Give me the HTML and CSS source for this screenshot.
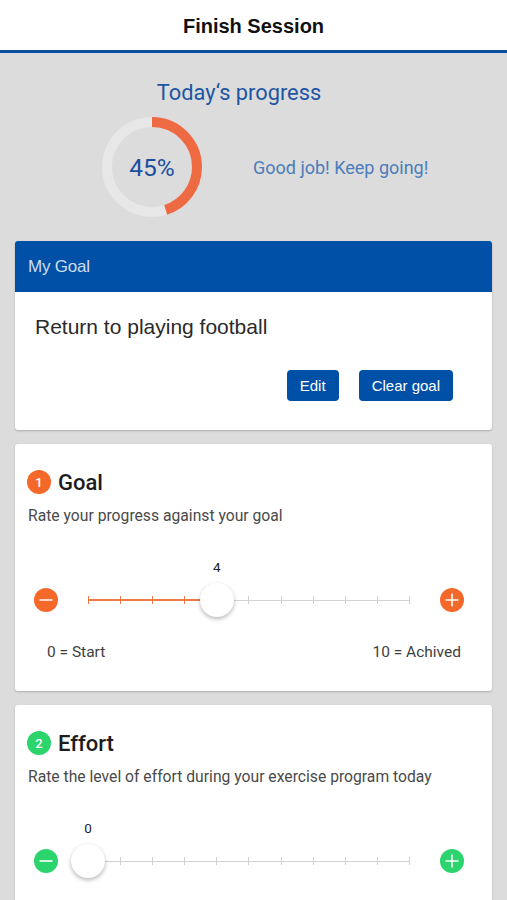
FILE: index.html
```html
<!DOCTYPE html>
<html>
<head>
<meta charset="utf-8">
<link rel="stylesheet" href="styles.css">
</head>
<body>
<header class="topbar"><h1 class="title">Finish Session</h1></header>

<section class="progress">
  <h2 class="progress-title">Today‘s progress</h2>
  <div class="progress-row">
    <div class="ring">
      <svg width="100" height="100" viewBox="0 0 100 100">
        <circle cx="50" cy="50" r="45" fill="none" stroke="#e7e7e7" stroke-width="10"/>
        <circle cx="50" cy="50" r="45" fill="none" stroke="#ee6a43" stroke-width="10" stroke-dasharray="127.2 400" transform="rotate(-90 50 50)"/>
      </svg>
      <span class="ring-label">45%</span>
    </div>
    <p class="cheer">Good job! Keep going!</p>
  </div>
</section>

<main class="cards">
  <div class="card goal-card">
    <div class="goal-head">My Goal</div>
    <div class="goal-body">
      <p class="goal-text">Return to playing football</p>
      <div class="goal-actions">
        <button class="btn">Edit</button>
        <button class="btn">Clear goal</button>
      </div>
    </div>
  </div>

  <div class="card rate-card orange">
    <div class="rate-head"><span class="badge">1</span><span class="rate-title">Goal</span></div>
    <p class="rate-desc">Rate your progress against your goal</p>
    <div class="slider">
      <svg class="step" width="24" height="24" viewBox="0 0 24 24"><circle cx="12" cy="12" r="12" class="step-bg"/><path d="M5.5 12h13" stroke="#fff" stroke-width="1.6"/></svg>
      <div class="track">
        <div class="line" style="--fill:40%">
          <i></i><i></i><i></i><i></i><i></i><i></i><i></i><i></i><i></i><i></i><i></i>
        </div>
        <div class="thumb" style="left:40%"><span class="thumb-value">4</span></div>
      </div>
      <svg class="step" width="24" height="24" viewBox="0 0 24 24"><circle cx="12" cy="12" r="12" class="step-bg"/><path d="M5.5 12h13M12 5.5v13" stroke="#fff" stroke-width="1.6"/></svg>
    </div>
    <div class="scale"><span>0 = Start</span><span>10 = Achived</span></div>
  </div>

  <div class="card rate-card green">
    <div class="rate-head"><span class="badge">2</span><span class="rate-title">Effort</span></div>
    <p class="rate-desc">Rate the level of effort during your exercise program today</p>
    <div class="slider">
      <svg class="step" width="24" height="24" viewBox="0 0 24 24"><circle cx="12" cy="12" r="12" class="step-bg"/><path d="M5.5 12h13" stroke="#fff" stroke-width="1.6"/></svg>
      <div class="track">
        <div class="line" style="--fill:0%">
          <i></i><i></i><i></i><i></i><i></i><i></i><i></i><i></i><i></i><i></i><i></i>
        </div>
        <div class="thumb" style="left:0%"><span class="thumb-value">0</span></div>
      </div>
      <svg class="step" width="24" height="24" viewBox="0 0 24 24"><circle cx="12" cy="12" r="12" class="step-bg"/><path d="M5.5 12h13M12 5.5v13" stroke="#fff" stroke-width="1.6"/></svg>
    </div>
  </div>
</main>
</body>
</html>
```

FILE: styles.css
```css
* { box-sizing: border-box; }
html, body { margin: 0; padding: 0; }
body {
  background: #dcdcdc;
  font-family: Roboto, "Liberation Sans", sans-serif;
  width: 507px;
  height: 900px;
  overflow: hidden;
}
.topbar {
  background: #fff;
  height: 53px;
  border-bottom: 3px solid #0b4fa0;
  display: flex;
  align-items: center;
  justify-content: center;
}
.title {
  margin: 0;
  font-family: "Liberation Sans", Arial, sans-serif;
  font-weight: bold;
  font-size: 20px;
  color: #111;
  padding-top: 3px;
}
.progress { padding-top: 27px; }
.progress-title {
  margin: 0;
  font-weight: 400;
  font-size: 21.8px;
  line-height: 26px;
  color: #1d56a4;
  text-align: center;
  padding-right: 29px;
}
.progress-row {
  display: flex;
  align-items: center;
  margin-top: 11px;
  padding-left: 102px;
}
.ring {
  position: relative;
  width: 100px;
  height: 100px;
}
.ring svg { display: block; }
.ring-label {
  position: absolute;
  inset: 0;
  display: flex;
  align-items: center;
  justify-content: center;
  font-size: 24.5px;
  color: #1b4f9d;
}
.cheer {
  margin: 0 0 0 51px;
  font-size: 18px;
  color: #4b7cbb;
}
.cards {
  display: flex;
  flex-direction: column;
  gap: 14px;
  padding: 24px 15px 0;
}
.card {
  background: #fff;
  border-radius: 3px;
  box-shadow: 0 1px 2px rgba(0,0,0,0.22);
  overflow: hidden;
}
.goal-head {
  background: #0050a7;
  height: 51px;
  display: flex;
  align-items: center;
  padding-left: 13px;
  font-family: "Liberation Sans", Arial, sans-serif;
  font-size: 17px;
  color: rgba(255,255,255,0.82);
  letter-spacing: -0.2px;
}
.goal-body { padding: 22px 39px 29px 20px; }
.goal-text {
  margin: 0;
  font-family: "Liberation Sans", Arial, sans-serif;
  font-size: 21px;
  line-height: 25px;
  color: #2a2a2a;
}
.goal-actions {
  display: flex;
  justify-content: flex-end;
  gap: 20px;
  margin-top: 31px;
}
.btn {
  background: #0050a7;
  color: #fff;
  border: 0;
  border-radius: 4px;
  height: 31px;
  padding: 0 13px;
  font-family: "Liberation Sans", Arial, sans-serif;
  font-size: 15px;
}
.rate-card { padding: 26px 12px 29px 12px; }
.rate-head {
  display: flex;
  align-items: center;
  height: 24px;
}
.badge {
  width: 24px;
  height: 24px;
  border-radius: 50%;
  display: flex;
  align-items: center;
  justify-content: center;
  color: #fff;
  font-size: 13px;
  font-weight: 500;
}
.orange .badge, .orange .step-bg { fill: #f4682a; background: #f4682a; }
.green .badge, .green .step-bg { fill: #2bd46c; background: #2bd46c; }
.rate-title {
  margin-left: 7px;
  font-size: 22px;
  font-weight: 500;
  color: #1c1c1c;
}
.rate-desc {
  margin: 12px 0 0 1px;
  font-size: 15.7px;
  line-height: 20px;
  color: #4a4a4a;
}
.slider {
  display: flex;
  align-items: center;
  height: 34px;
  margin-top: 57px;
  padding: 0 16px 0 7px;
}
.step { display: block; flex: none; }
.track {
  position: relative;
  flex: 1;
  margin: 0 30px;
  height: 34px;
  display: flex;
  align-items: center;
}
.line {
  flex: 1;
  height: 8px;
  display: flex;
  justify-content: space-between;
  align-items: stretch;
  background:
    linear-gradient(#f07a45, #f07a45) left center / var(--fill) 2px no-repeat,
    linear-gradient(#d2d2d2, #d2d2d2) left center / 100% 1px no-repeat;
}
.line i {
  display: block;
  width: 1px;
  background: #cfcfcf;
}
.orange .line i:nth-child(-n+5) { background: #f07a45; }
.thumb {
  position: absolute;
  top: 0;
  width: 34px;
  height: 34px;
  margin-left: -17px;
  border-radius: 50%;
  background: #fff;
  box-shadow: 0 2px 4px rgba(0,0,0,0.28);
}
.thumb-value {
  position: absolute;
  left: 0;
  right: 0;
  top: -24px;
  text-align: center;
  font-size: 13.5px;
  line-height: 16px;
  color: #222;
}
.scale {
  display: flex;
  justify-content: space-between;
  margin-top: 25px;
  padding: 0 19px 0 20px;
  font-size: 15.5px;
  line-height: 20px;
  color: #3e3e3e;
}
```
